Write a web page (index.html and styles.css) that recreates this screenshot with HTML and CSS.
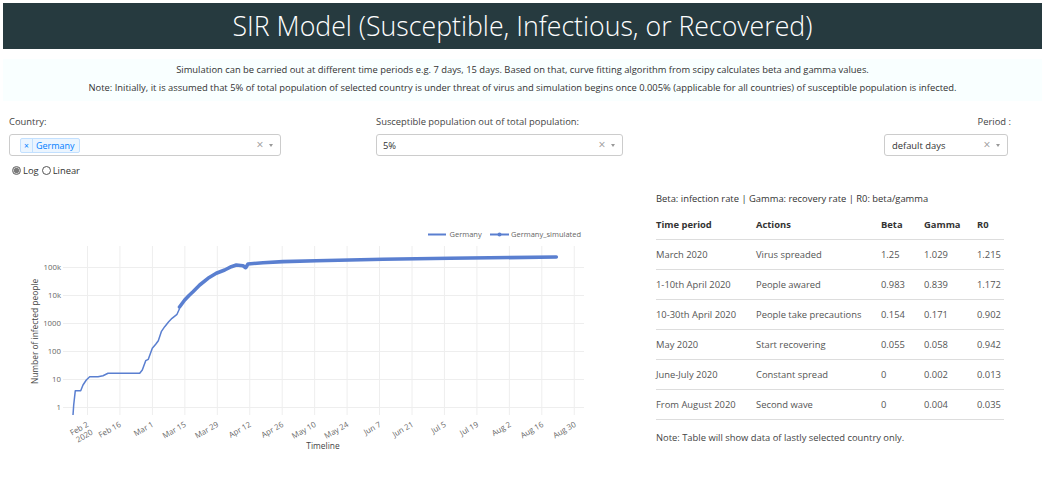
FILE: index.html
```html
<!DOCTYPE html>
<html lang="en">
<head>
<meta charset="utf-8">
<title>SIR Model</title>
<link rel="stylesheet" href="styles.css">
</head>
<body>
<div class="page">
  <header class="banner">
    <h1>SIR Model (Susceptible, Infectious, or Recovered)</h1>
  </header>

  <div class="intro">
    <p>Simulation can be carried out at different time periods e.g. 7 days, 15 days. Based on that, curve fitting algorithm from scipy calculates beta and gamma values.</p>
    <p>Note: Initially, it is assumed that 5% of total population of selected country is under threat of virus and simulation begins once 0.005% (applicable for all countries) of susceptible population is infected.</p>
  </div>

  <div class="controls">
    <div class="ctl ctl-country">
      <div class="ctl-label">Country:</div>
      <div class="select">
        <div class="select-value select-value-multi">
          <span class="tag"><span class="tag-x">×</span><span class="tag-label">Germany</span></span>
        </div>
        <span class="select-clear">×</span>
        <span class="select-arrow"></span>
      </div>
      <div class="radios">
        <span class="radio radio-on"></span><span class="radio-text">Log</span>
        <span class="radio"></span><span class="radio-text">Linear</span>
      </div>
    </div>

    <div class="ctl ctl-susc">
      <div class="ctl-label">Susceptible population out of total population:</div>
      <div class="select">
        <div class="select-value">5%</div>
        <span class="select-clear">×</span>
        <span class="select-arrow"></span>
      </div>
    </div>

    <div class="ctl ctl-period">
      <div class="ctl-label ctl-label-right">Period :</div>
      <div class="select">
        <div class="select-value select-value-period">default days</div>
        <span class="select-clear">×</span>
        <span class="select-arrow"></span>
      </div>
    </div>
  </div>

  <div class="lower">
    <div class="chart">
      <svg class="chart-svg" width="600" height="280" viewBox="0 180 600 280" xmlns="http://www.w3.org/2000/svg">
        <g class="grid">
          <line x1="84.5" y1="246" x2="84.5" y2="415"/>
          <line x1="116.95" y1="246" x2="116.95" y2="415"/>
          <line x1="149.4" y1="246" x2="149.4" y2="415"/>
          <line x1="181.85" y1="246" x2="181.85" y2="415"/>
          <line x1="214.3" y1="246" x2="214.3" y2="415"/>
          <line x1="246.75" y1="246" x2="246.75" y2="415"/>
          <line x1="279.2" y1="246" x2="279.2" y2="415"/>
          <line x1="311.65" y1="246" x2="311.65" y2="415"/>
          <line x1="344.1" y1="246" x2="344.1" y2="415"/>
          <line x1="376.55" y1="246" x2="376.55" y2="415"/>
          <line x1="409" y1="246" x2="409" y2="415"/>
          <line x1="441.45" y1="246" x2="441.45" y2="415"/>
          <line x1="473.9" y1="246" x2="473.9" y2="415"/>
          <line x1="506.35" y1="246" x2="506.35" y2="415"/>
          <line x1="538.8" y1="246" x2="538.8" y2="415"/>
          <line x1="571.25" y1="246" x2="571.25" y2="415"/>
          <line x1="60" y1="267.5" x2="581" y2="267.5"/>
          <line x1="60" y1="295.5" x2="581" y2="295.5"/>
          <line x1="60" y1="323.5" x2="581" y2="323.5"/>
          <line x1="60" y1="351.5" x2="581" y2="351.5"/>
          <line x1="60" y1="379.5" x2="581" y2="379.5"/>
          <line x1="60" y1="407.5" x2="581" y2="407.5"/>
        </g>

        <g class="ytick">
          <text x="58" y="270.3">100k</text>
          <text x="58" y="298.3">10k</text>
          <text x="58" y="326.3">1000</text>
          <text x="58" y="354.3">100</text>
          <text x="58" y="382.3">10</text>
          <text x="58" y="410.3">1</text>
        </g>

        <g class="xtick">
          <text transform="translate(86 426) rotate(-30)"><tspan x="0" y="0">Feb 2</tspan><tspan x="0" dy="1.15em">2020</tspan></text>
          <text transform="translate(118.5 426) rotate(-30)">Feb 16</text>
          <text transform="translate(151 426) rotate(-30)">Mar 1</text>
          <text transform="translate(183.5 426) rotate(-30)">Mar 15</text>
          <text transform="translate(216 426) rotate(-30)">Mar 29</text>
          <text transform="translate(248.5 426) rotate(-30)">Apr 12</text>
          <text transform="translate(281 426) rotate(-30)">Apr 26</text>
          <text transform="translate(313.5 426) rotate(-30)">May 10</text>
          <text transform="translate(346 426) rotate(-30)">May 24</text>
          <text transform="translate(378.5 426) rotate(-30)">Jun 7</text>
          <text transform="translate(411 426) rotate(-30)">Jun 21</text>
          <text transform="translate(443.5 426) rotate(-30)">Jul 5</text>
          <text transform="translate(476 426) rotate(-30)">Jul 19</text>
          <text transform="translate(508.5 426) rotate(-30)">Aug 2</text>
          <text transform="translate(541 426) rotate(-30)">Aug 16</text>
          <text transform="translate(573.5 426) rotate(-30)">Aug 30</text>
        </g>

        <text class="axis-title" x="320" y="448.5">Timeline</text>
        <text class="axis-title" transform="translate(34.5 331.5) rotate(-90)">Number of infected people</text>

        <path class="trace-thin" d="M70,415 L70.7,405 L72.3,390.7 L77.7,390.7 L80,385 L83.3,380 L86.7,376.7 L95,376.7 L100,375.7 L105,373.3 L136.7,373.3 L139.3,370 L142.7,360.7 L145.3,359.3 L149.3,348.3 L152.7,344.3 L155.3,340.7 L158.3,331.7 L161.7,326.7 L165.7,321.7 L169,318.3 L174,314.3 L176.7,308.3"/>
        <path class="trace-thick" d="M176.5,307 L181.7,300 L186,295.5 L190,291.7 L196.7,285 L205,278.3 L213.3,273.3 L221.7,270 L228.3,266.7 L233.3,265 L240,265.7 L242.7,267.7 L245,264 L260,262.7 L280,261.6 L313.3,260.7 L380,259.3 L446.7,258.3 L553.3,257"/>

        <g class="legend">
          <line class="legend-line" x1="425" y1="234.5" x2="443" y2="234.5"/>
          <text x="446.5" y="237">Germany</text>
          <line class="legend-line" x1="487" y1="234.5" x2="506" y2="234.5"/>
          <circle class="legend-dot" cx="496.5" cy="234.5" r="2"/>
          <text x="508" y="237">Germany_simulated</text>
        </g>
      </svg>
    </div>

    <div class="table-panel">
      <div class="table-caption">Beta: infection rate | Gamma: recovery rate | R0: beta/gamma</div>
      <div class="rates">
        <div class="trow thead">
          <span>Time period</span><span>Actions</span><span>Beta</span><span>Gamma</span><span>R0</span>
        </div>
        <div class="trow">
          <span>March 2020</span><span>Virus spreaded</span><span>1.25</span><span>1.029</span><span>1.215</span>
        </div>
        <div class="trow">
          <span>1-10th April 2020</span><span>People awared</span><span>0.983</span><span>0.839</span><span>1.172</span>
        </div>
        <div class="trow">
          <span>10-30th April 2020</span><span>People take precautions</span><span>0.154</span><span>0.171</span><span>0.902</span>
        </div>
        <div class="trow">
          <span>May 2020</span><span>Start recovering</span><span>0.055</span><span>0.058</span><span>0.942</span>
        </div>
        <div class="trow">
          <span>June-July 2020</span><span>Constant spread</span><span>0</span><span>0.002</span><span>0.013</span>
        </div>
        <div class="trow">
          <span>From August 2020</span><span>Second wave</span><span>0</span><span>0.004</span><span>0.035</span>
        </div>
      </div>
      <div class="table-note">Note: Table will show data of lastly selected country only.</div>
    </div>
  </div>
</div>
</body>
</html>
```

FILE: styles.css
```css
html, body {
  margin: 0;
  padding: 0;
  background: #ffffff;
}

body {
  font-family: "Open Sans", "DejaVu Sans", sans-serif;
  color: #333333;
}

.page {
  padding: 3px;
}

.banner {
  height: 46px;
  background: #263a3f;
  display: flex;
  align-items: center;
  justify-content: center;
}

.banner h1 {
  margin: 0;
  font-size: 26.7px;
  font-weight: 300;
  color: #ffffff;
  line-height: 46px;
  letter-spacing: 0;
}

.intro {
  margin-top: 10px;
  background: #f9ffff;
  padding: 2px 0 4px;
  text-align: center;
}

.intro p {
  margin: 0;
  font-size: 9.4px;
  line-height: 18px;
  color: #333333;
}

/* controls */
.controls {
  display: flex;
  align-items: flex-start;
  margin-top: 14px;
  padding: 0 6px;
}

.ctl-country {
  width: 272px;
}

.ctl-susc {
  width: 247px;
  margin-left: 95px;
}

.ctl-period {
  width: 124px;
  margin-left: auto;
  margin-right: 28px;
}

.ctl-label {
  font-size: 9.4px;
  line-height: 14px;
  color: #444444;
  margin-bottom: 5px;
}

.ctl-label-right {
  text-align: right;
  margin-right: -3px;
}

.select {
  box-sizing: border-box;
  height: 22px;
  border: 1px solid #cccccc;
  border-radius: 3px;
  display: flex;
  align-items: center;
  background: #ffffff;
}

.select-value {
  flex: 1;
  padding-left: 6px;
  font-size: 9.4px;
  color: #333333;
  white-space: nowrap;
}

.select-value-multi {
  padding-left: 10px;
  display: flex;
}

.select-value-period {
  padding-left: 7px;
}

.tag {
  display: inline-flex;
  align-items: center;
  box-sizing: border-box;
  height: 15px;
  border: 1px solid #c2e0ff;
  border-radius: 2px;
  background: #ebf5ff;
  color: #007eff;
  font-size: 9px;
  line-height: 13px;
}

.tag-x {
  padding: 0 3px;
  border-right: 1px solid #c2e0ff;
  font-size: 8.5px;
}

.tag-label {
  padding: 0 4px 0 3px;
}

.select-clear {
  width: 10px;
  text-align: center;
  color: #999999;
  font-size: 12px;
  line-height: 14px;
}

.select-arrow {
  width: 0;
  height: 0;
  margin: 1px 7px 0 4px;
  border-style: solid;
  border-width: 3px 2.5px 0;
  border-color: #999999 transparent transparent;
}

.radios {
  display: flex;
  align-items: center;
  height: 20px;
  margin-top: 4px;
  padding-left: 3px;
  font-size: 9.4px;
  color: #333333;
}

.radio {
  box-sizing: border-box;
  width: 9px;
  height: 9px;
  border-radius: 50%;
  border: 1px solid #555555;
  background: #ffffff;
  margin-right: 2px;
}

.radio-on {
  border-color: #6b6b6b;
  background: radial-gradient(circle, #7a7a7a 0 2.2px, #c8c8c8 2.8px);
}

.radio-text {
  margin-right: 3px;
}

/* lower section */
.lower {
  display: flex;
  align-items: flex-start;
}

.chart {
  width: 600px;
  height: 280px;
  flex: none;
}

.chart-svg {
  display: block;
  font-family: "Open Sans", "DejaVu Sans", sans-serif;
}

.grid line {
  stroke: #eeeeee;
  stroke-width: 1;
}

.ytick text {
  font-size: 7.8px;
  fill: #666666;
  text-anchor: end;
}

.xtick text {
  font-size: 7.8px;
  fill: #666666;
  text-anchor: end;
}

.axis-title {
  font-size: 8.4px;
  fill: #444444;
  text-anchor: middle;
}

.trace-thin {
  fill: none;
  stroke: #5a7fd0;
  stroke-width: 1.5;
  stroke-linejoin: round;
}

.trace-thick {
  fill: none;
  stroke: #5a7fd0;
  stroke-width: 3.6;
  stroke-linejoin: round;
  stroke-linecap: round;
}

.legend text {
  font-size: 7.5px;
  fill: #666666;
}

.legend-line {
  stroke: #5a7fd0;
  stroke-width: 2;
}

.legend-dot {
  fill: #5a7fd0;
}

.table-panel {
  width: 348px;
  margin-left: 53px;
  padding-top: 12px;
}

.table-caption {
  font-size: 9.4px;
  line-height: 14px;
  color: #333333;
  margin-bottom: 4px;
}

.trow {
  display: grid;
  grid-template-columns: 100px 125px 43px 53px 27px;
  box-sizing: border-box;
  height: 30px;
  align-items: center;
  border-bottom: 1px solid #dddddd;
  font-size: 9.4px;
  color: #555555;
  white-space: nowrap;
}

.thead {
  font-weight: 700;
  color: #333333;
}

.table-note {
  margin-top: 11px;
  font-size: 9.4px;
  line-height: 14px;
  color: #444444;
}
```
